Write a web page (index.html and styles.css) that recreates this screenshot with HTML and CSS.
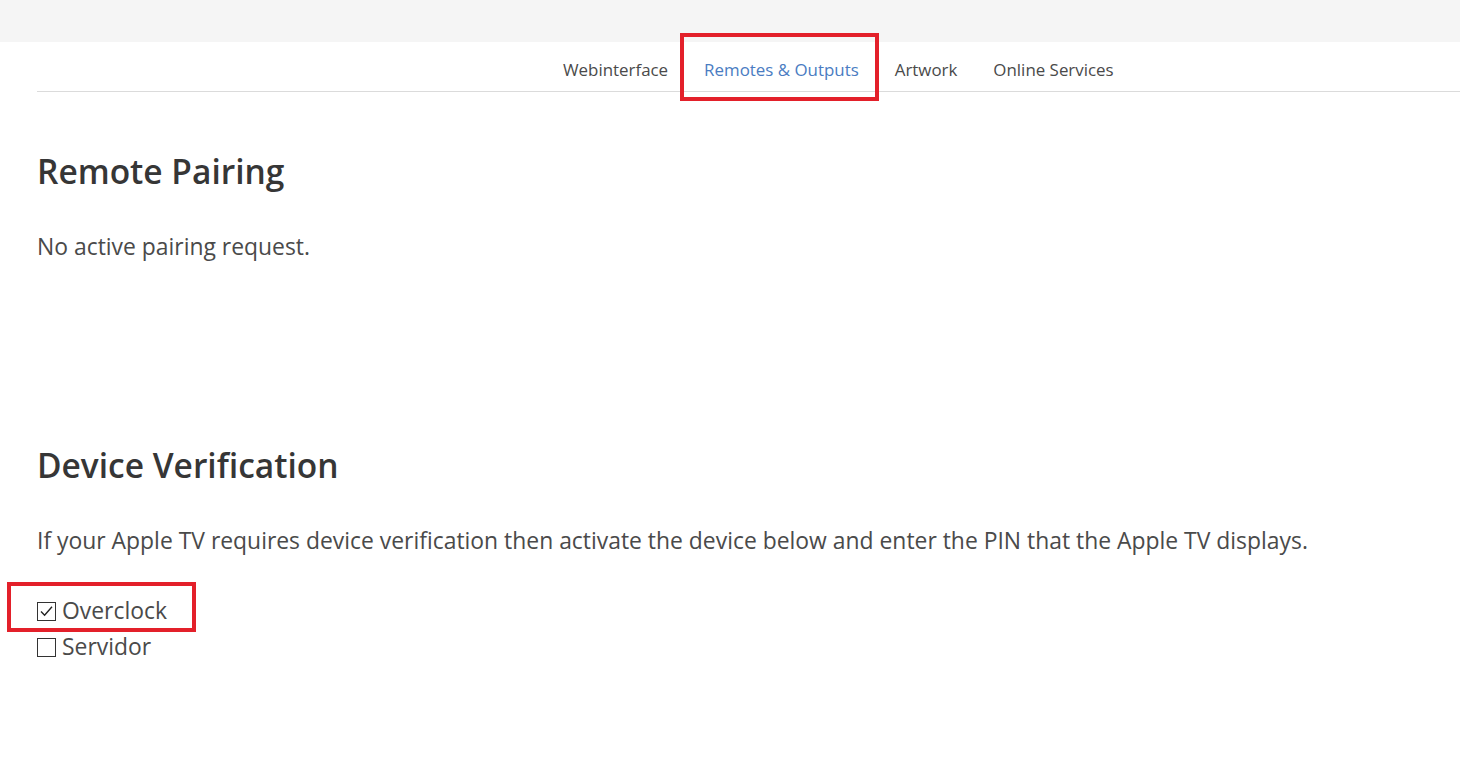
FILE: index.html
```html
<!DOCTYPE html>
<html lang="en">
<head>
<meta charset="utf-8">
<title>Settings</title>
<link rel="stylesheet" href="styles.css">
</head>
<body>
<div class="topbar"></div>
<nav class="tabs">
  <ul>
    <li><a href="#">Webinterface</a></li>
    <li class="is-active"><a href="#">Remotes &amp; Outputs</a><span class="mark mark-tab"></span></li>
    <li><a href="#">Artwork</a></li>
    <li><a href="#">Online Services</a></li>
  </ul>
</nav>
<main class="content">
  <section class="section first">
    <h1 class="title">Remote Pairing</h1>
    <p class="text">No active pairing request.</p>
  </section>
  <section class="section second">
    <h1 class="title">Device Verification</h1>
    <p class="text">If your Apple TV requires device verification then activate the device below and enter the PIN that the Apple TV displays.</p>
    <div class="checks">
      <label class="check"><span class="box checked"><svg viewBox="0 0 19 19" width="19" height="19"><path d="M4 9.6 L7.6 13.2 L15 4.8" fill="none" stroke="#222" stroke-width="1.4"/></svg></span>Overclock<span class="mark mark-check"></span></label>
      <label class="check"><span class="box"></span>Servidor</label>
    </div>
  </section>
</main>
</body>
</html>
```
FILE: styles.css
```css
html, body {
  margin: 0;
  padding: 0;
  background: #fff;
}
body {
  font-family: "Open Sans", "Noto Sans", sans-serif;
  color: #4a4a4a;
}
.topbar {
  height: 42px;
  background: #f5f5f5;
}
.tabs {
  margin-left: 37px;
  border-bottom: 1px solid #dbdbdb;
  height: 49px;
}
.tabs ul {
  list-style: none;
  margin: 0;
  padding: 16px 0 0 508px;
  display: flex;
  align-items: flex-start;
}
.tabs li {
  position: relative;
}
.tabs a {
  display: block;
  padding: 0 18px;
  font-size: 16.9px;
  color: #4a4a4a;
  text-decoration: none;
  line-height: 24px;
}
.tabs li.is-active a {
  color: #4a7cc2;
}
.mark {
  position: absolute;
  border: 4px solid #e3202a;
  box-sizing: border-box;
  pointer-events: none;
}
.mark-tab {
  left: -6px;
  top: -25px;
  width: 199px;
  height: 68px;
}
.content {
  padding: 0 37px;
}
.first {
  padding-top: 57px;
}
.second {
  padding-top: 181px;
}
.title {
  font-size: 33.5px;
  font-weight: 600;
  color: #363636;
  margin: 0;
  line-height: 44px;
}
.text {
  font-size: 22.9px;
  margin: 39px 0 0;
  line-height: 30px;
}
.checks {
  margin-top: 37px;
  display: flex;
  flex-direction: column;
}
.check {
  position: relative;
  display: flex;
  align-items: center;
  font-size: 22.9px;
  line-height: 36px;
  height: 36px;
}
.box {
  width: 19px;
  height: 19px;
  border: 1px solid #333;
  margin-right: 6px;
  display: inline-flex;
  align-items: center;
  justify-content: center;
  box-sizing: border-box;
  background: #fff;
}
.box svg {
  display: block;
  flex: none;
}
.mark-check {
  left: -30px;
  top: -11px;
  width: 189px;
  height: 50px;
}
```
